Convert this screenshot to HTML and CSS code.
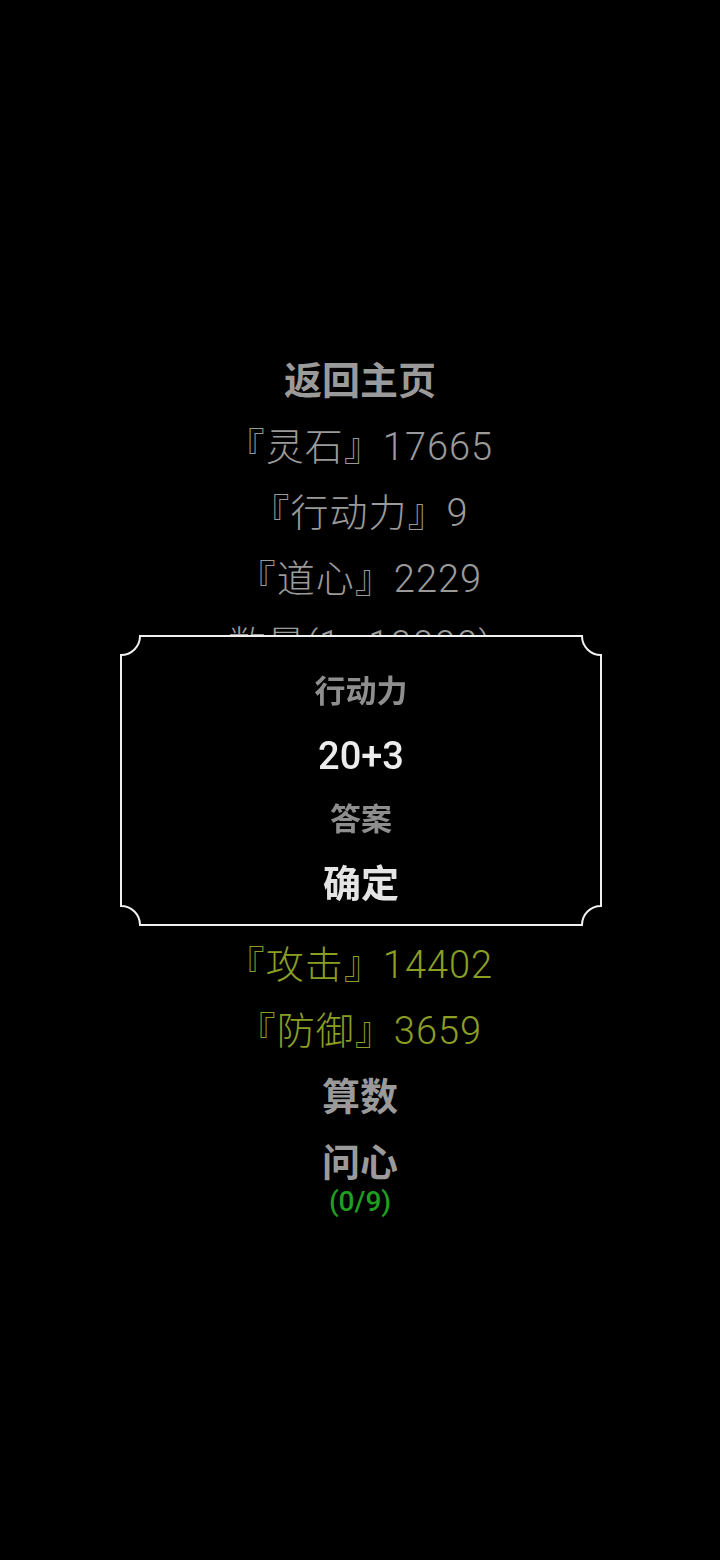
FILE: index.html
```html
<!DOCTYPE html>
<html lang="zh-CN">
<head>
<meta charset="utf-8">
<title>行动力</title>
<link rel="stylesheet" href="styles.css">
</head>
<body>
<main class="page">
  <div class="list">
    <div class="row strong">返回主页</div>
    <div class="row thin">『灵石』17665</div>
    <div class="row thin">『行动力』9</div>
    <div class="row thin">『道心』2229</div>
    <div class="row thin">数量(1~10000)</div>
    <div class="hidden-block"></div>
    <div class="row thin olive">『攻击』14402</div>
    <div class="row thin olive">『防御』3659</div>
    <div class="row strong">算数</div>
    <div class="row strong">问心</div>
    <div class="count">(0/9)</div>
  </div>
</main>
<div class="dialog">
  <svg class="frame" viewBox="0 0 482 291" width="482" height="291" aria-hidden="true">
    <path d="M20 1 H462 A19 19 0 0 0 481 20 V271 A19 19 0 0 0 462 290 H20 A19 19 0 0 0 1 271 V20 A19 19 0 0 0 20 1 Z" fill="#000" stroke="#f0f0f0" stroke-width="2"/>
  </svg>
  <div class="dialog-body">
    <div class="d-title">行动力</div>
    <div class="d-question">20+3</div>
    <div class="d-label">答案</div>
    <div class="d-confirm">确定</div>
  </div>
</div>
</body>
</html>
```
FILE: styles.css
```css
html, body {
  margin: 0;
  padding: 0;
  background: #000;
}
body {
  font-family: Roboto, "Noto Sans CJK SC", sans-serif;
  color: #9a9a9a;
}
.page {
  min-height: 1560px;
  box-sizing: border-box;
  padding-bottom: 4px;
  display: flex;
  flex-direction: column;
  justify-content: center;
  align-items: center;
}
.list {
  display: flex;
  flex-direction: column;
  align-items: center;
}
.row {
  height: 66px;
  line-height: 66px;
  font-size: 38px;
  white-space: nowrap;
}
.thin {
  font-weight: 300;
  letter-spacing: 1px;
  color: #9a9a9a;
}
.strong {
  font-weight: 700;
  color: #9a9a9a;
}
.olive {
  color: #8a9e24;
}
.hidden-block {
  height: 254px;
}
.count {
  height: 12px;
  line-height: 12px;
  font-size: 28px;
  font-weight: 500;
  color: #1f9e1f;
}
.dialog {
  position: fixed;
  left: 120px;
  top: 635px;
  width: 482px;
  height: 291px;
}
.frame {
  position: absolute;
  left: 0;
  top: 0;
  display: block;
}
.dialog-body {
  position: relative;
  padding-top: 25px;
  display: flex;
  flex-direction: column;
  align-items: center;
}
.dialog-body > div {
  height: 64px;
  line-height: 64px;
  white-space: nowrap;
}
.d-title {
  font-size: 31px;
  font-weight: 700;
  color: #8e8e8e;
}
.d-question {
  font-size: 38px;
  font-weight: 500;
  color: #ececec;
}
.d-label {
  font-size: 31px;
  font-weight: 700;
  color: #8e8e8e;
}
.d-confirm {
  font-size: 38px;
  font-weight: 700;
  color: #e4e4e4;
}
```
